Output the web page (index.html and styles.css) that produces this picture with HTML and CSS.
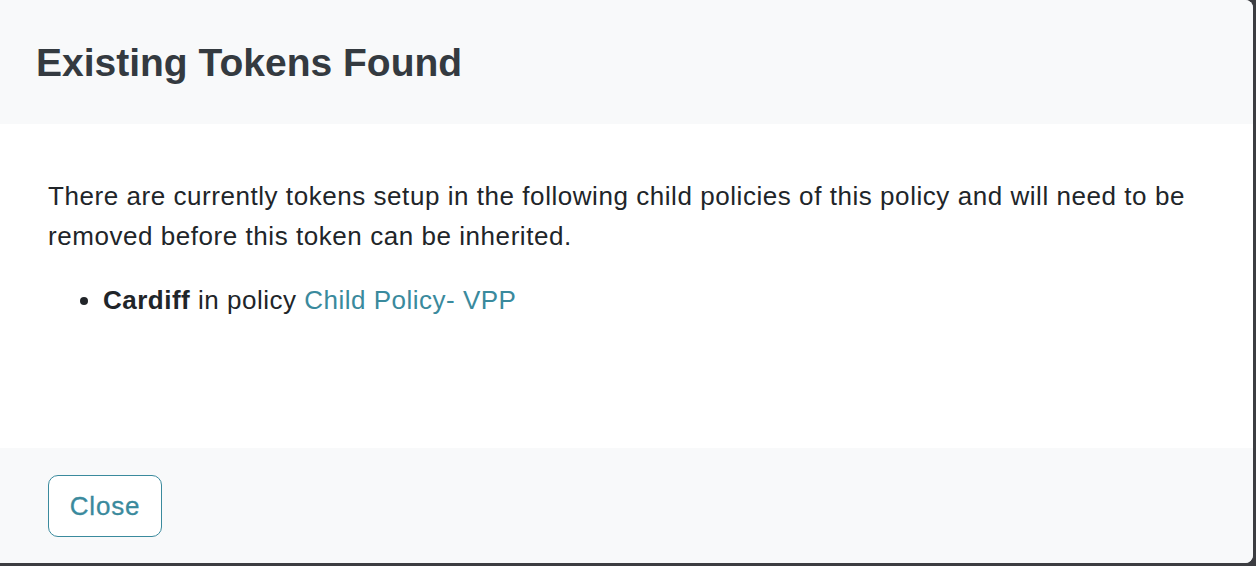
FILE: index.html
```html
<!DOCTYPE html>
<html>
<head>
<meta charset="utf-8">
<link rel="stylesheet" href="styles.css">
</head>
<body>
<div class="modal">
  <div class="modal-header">
    <h1 class="modal-title">Existing Tokens Found</h1>
  </div>
  <div class="modal-body">
    <p class="intro">There are currently tokens setup in the following child policies of this policy and will need to be removed before this token can be inherited.</p>
    <ul class="token-list">
      <li><strong>Cardiff</strong> in policy <a class="policy-link" href="#">Child Policy- VPP</a></li>
    </ul>
  </div>
  <div class="modal-footer">
    <button class="btn-close">Close</button>
  </div>
</div>
</body>
</html>
```
FILE: styles.css
```css
html, body {
  margin: 0;
  padding: 0;
  height: 100%;
}
body {
  background: #3c3d41;
  font-family: "Liberation Sans", Arial, sans-serif;
  color: #212529;
  overflow: hidden;
}
.modal {
  width: 1253px;
  height: 563px;
  background: #fff;
  border-radius: 0 8px 8px 0;
  overflow: hidden;
  display: flex;
  flex-direction: column;
}
.modal-header {
  height: 124px;
  box-sizing: border-box;
  background: #f8f9fa;
  padding: 0 0 0 36px;
  display: flex;
  align-items: center;
}
.modal-title {
  margin: 0;
  font-size: 39px;
  font-weight: 700;
  color: #343a40;
  line-height: 1;
}
.modal-body {
  height: 324px;
  box-sizing: border-box;
  padding: 52px 48px 0 48px;
}
.intro {
  margin: 0;
  font-size: 26px;
  letter-spacing: 0.55px;
  line-height: 40px;
}
.token-list {
  margin: 24px 0 0 0;
  padding-left: 55px;
  font-size: 26px;
  letter-spacing: 0.5px;
  line-height: 40px;
}
.policy-link {
  color: #3a8a9d;
  text-decoration: none;
}
.modal-footer {
  flex: 1;
  background: #f8f9fa;
  padding: 27px 48px 0 48px;
}
.btn-close {
  width: 114px;
  height: 62px;
  background: #fff;
  border: 1px solid #3a8a9d;
  border-radius: 10px;
  color: #3a8a9d;
  font-family: "Liberation Sans", Arial, sans-serif;
  font-size: 26px;
  letter-spacing: 0.8px;
  font-weight: 400;
  -webkit-text-stroke: 0.3px #3a8a9d;
  padding: 0;
  cursor: pointer;
}
```
